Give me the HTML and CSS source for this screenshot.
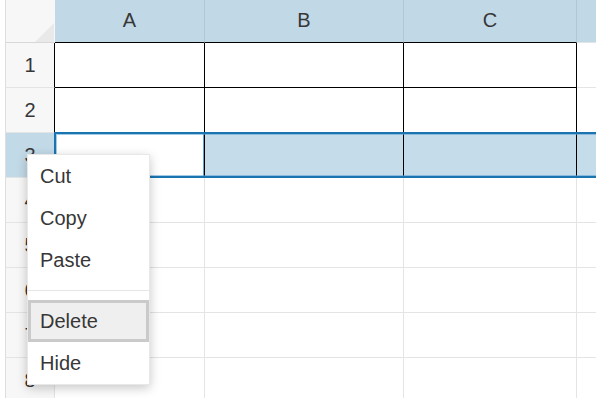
FILE: index.html
```html
<!DOCTYPE html>
<html>
<head>
<meta charset="utf-8">
<link rel="stylesheet" href="styles.css">
</head>
<body>
<div class="wrap">
  <div class="sheet">
    <div class="cell corner"></div>
    <div class="cell ch bkb">A</div>
    <div class="cell ch bkb">B</div>
    <div class="cell ch bkb">C</div>
    <div class="cell ch chd"></div>

    <div class="cell rh rhb">1</div>
    <div class="cell bk"></div>
    <div class="cell bk"></div>
    <div class="cell bk"></div>
    <div class="cell"></div>

    <div class="cell rh rhb">2</div>
    <div class="cell bk"></div>
    <div class="cell bk"></div>
    <div class="cell bk"></div>
    <div class="cell"></div>

    <div class="cell rh rhsel rhb">3</div>
    <div class="cell bk active"></div>
    <div class="cell bk sel"></div>
    <div class="cell bk sel"></div>
    <div class="cell sel"></div>

    <div class="cell rh">4</div>
    <div class="cell"></div>
    <div class="cell"></div>
    <div class="cell"></div>
    <div class="cell"></div>

    <div class="cell rh">5</div>
    <div class="cell"></div>
    <div class="cell"></div>
    <div class="cell"></div>
    <div class="cell"></div>

    <div class="cell rh">6</div>
    <div class="cell"></div>
    <div class="cell"></div>
    <div class="cell"></div>
    <div class="cell"></div>

    <div class="cell rh">7</div>
    <div class="cell"></div>
    <div class="cell"></div>
    <div class="cell"></div>
    <div class="cell"></div>

    <div class="cell rh">8</div>
    <div class="cell"></div>
    <div class="cell"></div>
    <div class="cell"></div>
    <div class="cell"></div>
  </div>

  <div class="selection"></div>

  <div class="menu">
    <div class="item">Cut</div>
    <div class="item">Copy</div>
    <div class="item">Paste</div>
    <div class="sep"></div>
    <div class="item hover">Delete</div>
    <div class="item">Hide</div>
  </div>
</div>
</body>
</html>
```

FILE: styles.css
```css
html, body {
  margin: 0;
  padding: 0;
  background: #ffffff;
  overflow: hidden;
}

body {
  font-family: "Liberation Sans", Arial, sans-serif;
  font-size: 20px;
  color: #373737;
}

.wrap {
  position: relative;
  width: 596px;
  height: 398px;
  overflow: hidden;
}

.sheet {
  display: grid;
  grid-template-columns: 50px 150px 199px 173px 200px;
  grid-template-rows: 43px repeat(8, 45px);
  margin-left: 5px;
}

.cell {
  box-sizing: border-box;
  border-right: 1px solid #e4e4e4;
  border-bottom: 1px solid #e4e4e4;
  background: #ffffff;
}

.corner {
  position: relative;
  background: #f7f7f7;
  border-left: 1px solid #dedede;
  border-right: 1px solid #f7f7f7;
  border-bottom: 1px solid #d8d8d8;
}

.corner::after {
  content: "";
  position: absolute;
  right: 0;
  bottom: 0;
  width: 0;
  height: 0;
  border-left: 19px solid transparent;
  border-bottom: 19px solid #e9e9e9;
}

.ch {
  background: #c1d8e6;
  border-right: 1px solid #aec8da;
  display: flex;
  align-items: center;
  justify-content: center;
  padding-bottom: 2px;
}

.ch.bkb {
  border-bottom: 1px solid #000000;
}

.chd {
  border-bottom: 1px solid #e4e4e4;
}

.rh {
  background: #f7f7f7;
  border-left: 1px solid #dedede;
  display: flex;
  align-items: center;
  justify-content: center;
}

.rhb {
  border-right-color: #000000;
}

.rhsel {
  background: #c2d9e7;
}

.bk {
  border-right-color: #000000;
  border-bottom-color: #000000;
}

.sel {
  background: #c5dcea;
}

.active {
  box-shadow: inset -1px 0 0 #6aa5d2;
}

.selection {
  position: absolute;
  left: 54px;
  top: 132px;
  width: 600px;
  height: 46px;
  box-sizing: border-box;
  border: 2px solid #1a74b0;
  box-shadow: inset 0 0 0 1px rgba(90, 160, 210, 0.55);
}

.menu {
  position: absolute;
  left: 27px;
  top: 154px;
  width: 123px;
  box-sizing: border-box;
  background: #ffffff;
  border: 1px solid #e8e8e8;
  box-shadow: 0 3px 10px rgba(0, 0, 0, 0.22);
  display: flex;
  flex-direction: column;
}

.item {
  height: 42px;
  line-height: 42px;
  padding-left: 12px;
  box-sizing: border-box;
  color: #373737;
}

.item.hover {
  background: #efefef;
  border: 3px solid #cacaca;
  line-height: 36px;
  padding-left: 9px;
}

.sep {
  height: 1px;
  background: #e6e6e6;
  margin: 9px 0;
}
```
